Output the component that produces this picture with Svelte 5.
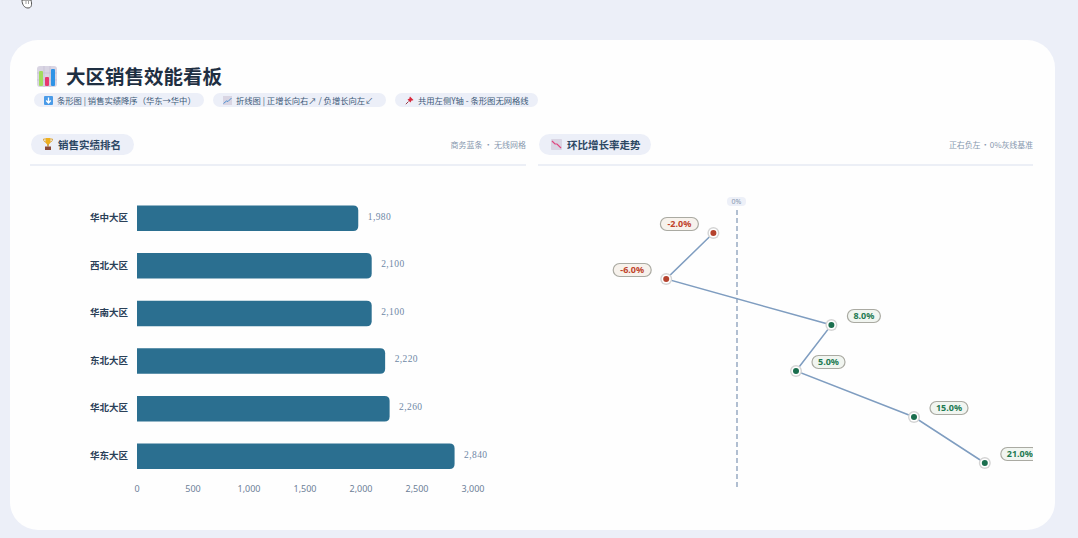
<script>
  const sales = [
    { name: '华中大区', value: 1980 },
    { name: '西北大区', value: 2100 },
    { name: '华南大区', value: 2100 },
    { name: '东北大区', value: 2220 },
    { name: '华北大区', value: 2260 },
    { name: '华东大区', value: 2840 }
  ];
  const ticks = [0, 500, 1000, 1500, 2000, 2500, 3000];
  const growth = [-2, -6, 8, 5, 15, 21];

  const barX = 107;
  const barScale = 0.112;
  const barY = (i) => 39.5 + i * 47.6;

  const zeroX = 199;
  const pct = 11.8;
  const points = growth.map((g, i) => ({ g, x: zeroX + g * pct, y: 67 + i * 46 }));
  const linePoints = points.map((p) => `${p.x},${p.y}`).join(' ');

  function barPath(i, v) {
    const y = barY(i);
    const w = v * barScale - 0.5;
    const h = 25.5;
    const r = 5;
    return `M${barX} ${y}H${barX + w - r}Q${barX + w} ${y} ${barX + w} ${y + r}V${y + h - r}Q${barX + w} ${y + h} ${barX + w - r} ${y + h}H${barX}Z`;
  }

  function labelWidth(g) {
    return Math.abs(g) >= 10 || g < 0 ? 38 : 33;
  }
  function labelX(p) {
    return p.g < 0 ? p.x - 15 - labelWidth(p.g) : p.x + 16;
  }
</script>

<svg class="cursor" viewBox="0 0 14 10" width="14" height="10" aria-hidden="true">
  <path d="M2 0C2 4 4 8 8 8S12 4 11 0Z" fill="#fff" stroke="#555" stroke-width="1" />
  <path d="M6 1v3M8.500 1v3" stroke="#777" stroke-width=".7" />
</svg>

<main class="card">
  <header class="top">
    <h1>
      <svg class="title-icon" viewBox="0 0 20 21" width="20" height="21" aria-hidden="true">
        <rect width="20" height="21" rx="3" fill="#d9d5e3" />
        <path d="M0 7H20M0 14H20M7 0V21M13 0V21" stroke="#c3bed2" stroke-width=".7" />
        <rect x="2" y="5" width="4" height="15" rx="1" fill="#a2dc5e" />
        <rect x="8" y="11" width="4" height="9" rx="1" fill="#e8366f" />
        <rect x="14" y="3" width="4" height="17" rx="1" fill="#2f93e6" />
      </svg>
      大区销售效能看板
    </h1>
    <div class="chips">
      <span class="chip one">
        <svg viewBox="0 0 9 9" width="9" height="9" aria-hidden="true">
          <rect width="9" height="9" rx="1" fill="#4a9be8" />
          <path d="M4.500 1.500V7M2.200 4.500 4.500 7 6.800 4.500" fill="none" stroke="#fff" stroke-width="1.300" />
        </svg>
        条形图 | 销售实绩降序（华东→华中）
      </span>
      <span class="chip two">
        <svg viewBox="0 0 9 9" width="9" height="9" aria-hidden="true">
          <rect width="9" height="9" fill="#d9d5e3" />
          <path d="M.5 7.500 3.500 5 5 5.500 8.500 2" fill="none" stroke="#4d8fd0" stroke-width="1" />
        </svg>
        折线图 | 正增长向右↗ / 负增长向左↙
      </span>
      <span class="chip three">
        <svg viewBox="0 0 9 9" width="9" height="9" aria-hidden="true">
          <path d="M5 .5 8.500 4 7.500 4.500 6.500 4.500 5.500 6.500 2.500 3.500 4.500 2.500 4.500 1.500Z" fill="#d8283c" />
          <path d="M3.500 5.500 .8 8.200" stroke="#8a2b35" stroke-width=".9" />
        </svg>
        共用左侧Y轴 - 条形图无网格线
      </span>
    </div>
  </header>

  <div class="panels">
    <section class="panel">
      <div class="panel-head">
        <span class="pill first">
          <svg viewBox="0 0 10 12" width="10" height="12" aria-hidden="true">
            <path d="M2.500 0H7.500V3.500C7.500 5.500 6 6.500 5 6.500S2.500 5.500 2.500 3.500Z" fill="#eeb01f" />
            <path d="M2.500 1H.5C.5 3 1.500 4 3 4.200M7.500 1H9.500C9.500 3 8.500 4 7 4.200" fill="none" stroke="#d8981a" stroke-width=".8" />
            <rect x="4.300" y="6" width="1.400" height="2.500" fill="#c98a18" />
            <rect x="2" y="8.500" width="6" height="3.500" fill="#8a4a3a" />
          </svg>
          销售实绩排名
        </span>
        <span class="note">商务蓝条 · 无线网格</span>
      </div>
      <svg class="chart" viewBox="0 0 496 332" width="496" height="332" role="img" aria-label="销售实绩排名">
        {#each sales as row, i}
          <text class="cat" x="98" y={barY(i) + 15.500} text-anchor="end">{row.name}</text>
          <path d={barPath(i, row.value)} fill="#2b6f90" />
          <text class="val" x={barX + row.value * barScale + 9} y={barY(i) + 14}>{row.value.toLocaleString('en-US')}</text>
        {/each}
        {#each ticks as t}
          <text class="tick" x={barX + t * barScale} y="325.500" text-anchor="middle">{t.toLocaleString('en-US')}</text>
        {/each}
      </svg>
    </section>

    <section class="panel">
      <div class="panel-head">
        <span class="pill">
          <svg viewBox="0 0 11 11" width="11" height="11" aria-hidden="true">
            <rect width="11" height="11" rx="1" fill="#d9d5e3" />
            <path d="M1 2 4 5 6 5 10 9" fill="none" stroke="#e0457f" stroke-width="1.200" />
          </svg>
          环比增长率走势
        </span>
        <span class="note tight">正右负左 · 0%灰线基准</span>
      </div>
      <svg class="chart" viewBox="0 0 495 332" width="495" height="332" role="img" aria-label="环比增长率走势">
        <rect x={zeroX - 10} y="31" width="19" height="9" rx="4" fill="#edf0f8" />
        <text class="zero" x={zeroX - 0.500} y="38" text-anchor="middle">0%</text>
        <line x1={zeroX} x2={zeroX} y1="44" y2="321" stroke="#7d94b3" stroke-width="1.200" stroke-dasharray="5 3" />
        <polyline points={linePoints} fill="none" stroke="#7f9dc0" stroke-width="1.500" />
        {#each points as p}
          <circle cx={p.x} cy={p.y} r="6" fill="#d4d4d4" />
          <circle cx={p.x} cy={p.y} r="4.600" fill="#fff" />
          <circle cx={p.x} cy={p.y} r="3" fill={p.g < 0 ? '#b5432e' : '#1a6e4e'} />
          <rect
            x={labelX(p)}
            y={p.y - 15.500}
            width={labelWidth(p.g)}
            height="13"
            rx="6.500"
            fill={p.g < 0 ? '#f7f2ec' : '#f1f5f0'}
            stroke="#aaaaa2"
            stroke-width="1.200"
          />
          <text
            class="pct"
            x={labelX(p) + labelWidth(p.g) / 2}
            y={p.y - 5.700}
            text-anchor="middle"
            fill={p.g < 0 ? '#c0432a' : '#1d7a52'}
          >{p.g.toFixed(1)}%</text>
        {/each}
      </svg>
    </section>
  </div>
</main>

<style>
  :global(body) {
    margin: 0;
    background: #eceff8;
    font-family: "Noto Sans CJK SC", "Noto Sans", sans-serif;
  }
  .cursor {
    position: absolute;
    left: 20px;
    top: 0;
  }
  .card {
    box-sizing: border-box;
    width: 1045px;
    height: 490px;
    margin: 40px 0 8px 10px;
    padding: 24px 21px 0 20px;
    background: #fefefe;
    border-radius: 28px;
    overflow: hidden;
  }
  h1 {
    display: flex;
    align-items: center;
    gap: 9px;
    margin: 0 0 0 7px;
    height: 24px;
    font-size: 19.500px;
    font-weight: 700;
    line-height: 24px;
    color: #1e2f42;
  }
  .chips {
    display: flex;
    gap: 9px;
    margin: 5px 0 0 4px;
  }
  .chip {
    display: flex;
    align-items: center;
    gap: 4px;
    box-sizing: border-box;
    height: 14px;
    padding-left: 10px;
    border-radius: 7px;
    background: #eceff8;
    font-size: 8.300px;
    line-height: 14px;
    color: #3d5a78;
    white-space: nowrap;
  }
  .chip.one { width: 170px; }
  .chip.two { width: 173px; }
  .chip.three { width: 143px; }
  .panels {
    display: grid;
    grid-template-columns: 496px 495px;
    gap: 12px;
    margin-top: 27px;
  }
  .panel-head {
    display: flex;
    align-items: center;
    justify-content: space-between;
    box-sizing: border-box;
    height: 32px;
    padding: 0 0 10px 1px;
    border-bottom: 2px solid #eceff6;
  }
  .pill {
    display: flex;
    align-items: center;
    gap: 5px;
    height: 21px;
    padding: 0 10px 0 12px;
    border-radius: 11px;
    background: #eceff8;
    font-size: 10.500px;
    font-weight: 700;
    line-height: 21px;
    color: #2c4763;
  }
  .pill.first {
    padding-right: 13px;
  }
  .note {
    font-size: 8px;
    color: #8798ae;
  }
  .note.tight {
    word-spacing: -1px;
    letter-spacing: -0.1px;
  }
  .chart {
    display: block;
  }
  .cat {
    font-size: 9.500px;
    font-weight: 700;
    fill: #2a4058;
  }
  .val {
    font-family: "Liberation Serif", serif;
    font-size: 9.500px;
    letter-spacing: 0.4px;
    fill: #6f88a6;
  }
  .tick {
    font-family: "Noto Sans", sans-serif;
    font-size: 9px;
    fill: #6d8098;
  }
  .zero {
    font-family: "Noto Sans", sans-serif;
    font-size: 7px;
    fill: #8798ae;
  }
  .pct {
    font-family: "Noto Sans", sans-serif;
    font-size: 9px;
    font-weight: 700;
  }
</style>
